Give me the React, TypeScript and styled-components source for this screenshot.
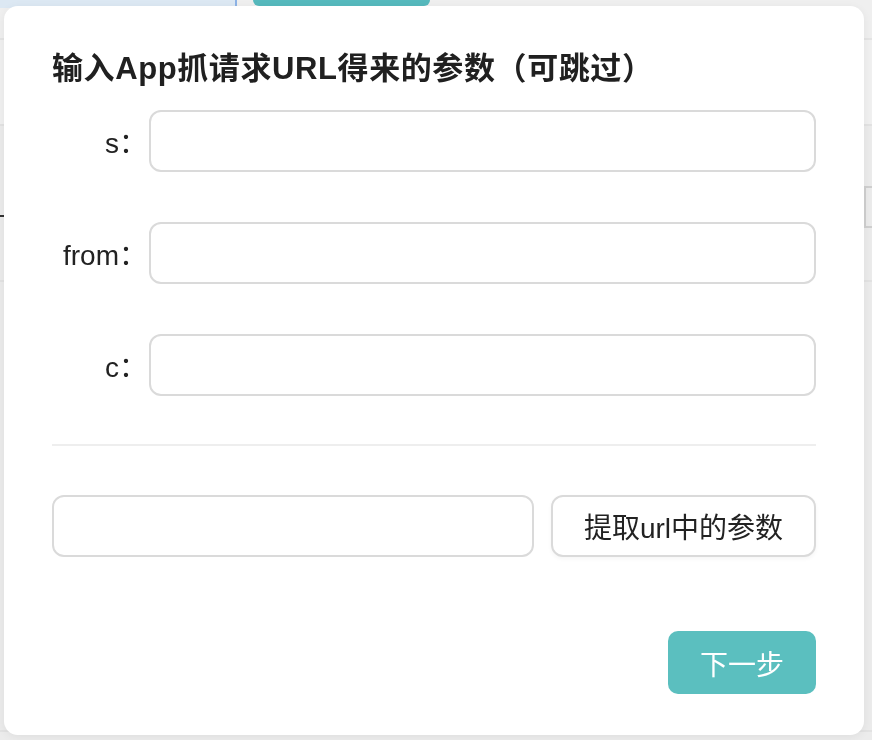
import React from "react";
import styled, { createGlobalStyle } from "styled-components";

const Global = createGlobalStyle`
  html, body { margin: 0; padding: 0; }
  body {
    width: 872px;
    height: 740px;
    overflow: hidden;
    background: #ececec;
    font-family: "Liberation Sans", "Noto Sans CJK SC", sans-serif;
  }
  * { box-sizing: border-box; }
`;

/* ---------- dimmed page behind the dialog ---------- */
const Page = styled.div`
  width: 872px;
  height: 740px;
  display: flex;
  flex-direction: column;
  background: #ececec;
`;

const TopBar = styled.div`
  height: 40px;
  display: flex;
  align-items: flex-start;
  background: #efefef;
  border-bottom: 2px solid #e4e4e4;
`;

const BlueArea = styled.div`
  width: 237px;
  height: 8px;
  background: #dce8f3;
  border-right: 2px solid #8db3e6;
`;

const TealTab = styled.div`
  width: 177px;
  height: 6px;
  margin-left: 16px;
  background: #56b9bd;
  border-radius: 0 0 10px 10px;
`;

const BgRow = styled.div<{ $h: number; $light?: boolean }>`
  height: ${(p) => p.$h}px;
  display: flex;
  align-items: flex-start;
  justify-content: space-between;
  background: ${(p) => (p.$light ? "#f0f0f0" : "#ebebeb")};
  border-bottom: 2px solid #e2e2e2;
`;

const DarkMark = styled.div`
  width: 6px;
  height: 2px;
  margin-top: 89px;
  background: #333;
`;

const BoxEdge = styled.div`
  width: 8px;
  height: 42px;
  margin-top: 60px;
  border: 2px solid #cfcfcf;
  border-right: none;
`;

/* ---------- dialog ---------- */
const Dialog = styled.div`
  position: fixed;
  left: 4px;
  top: 6px;
  width: 860px;
  height: 729px;
  background: #ffffff;
  border-radius: 14px;
  box-shadow: 0 2px 10px rgba(0, 0, 0, 0.06);
  padding: 40px 48px 41px 48px;
  display: flex;
  flex-direction: column;
`;

const Title = styled.h2`
  margin: 0 0 19px 0;
  font-size: 31px;
  letter-spacing: 0.6px;
  line-height: 45px;
  font-weight: 700;
  color: #202020;
  white-space: nowrap;
`;

const FormRow = styled.div`
  display: flex;
  align-items: center;
  margin-bottom: 50px;
  &:last-of-type {
    margin-bottom: 0;
  }
`;

const Label = styled.label`
  width: 97px;
  padding-right: 2px;
  flex: none;
  text-align: right;
  font-size: 28px;
  color: #222;
  white-space: nowrap;
`;

const TextInput = styled.input`
  flex: 1;
  min-width: 0;
  height: 62px;
  border: 2px solid #dadada;
  border-radius: 12px;
  padding: 0 20px;
  font-size: 28px;
  font-family: inherit;
  color: #222;
  background: #fff;
  outline: none;
`;

const Fields = styled.div`
  display: flex;
  flex-direction: column;
`;

const Divider = styled.hr`
  margin: 48px 0 49px 0;
  border: none;
  height: 2px;
  background: #eeeeee;
`;

const ExtractRow = styled.div`
  display: flex;
  gap: 17px;
`;

const SecondaryButton = styled.button`
  width: 265px;
  flex: none;
  height: 62px;
  border: 2px solid #dadada;
  border-radius: 12px;
  background: #fff;
  box-shadow: 0 2px 4px rgba(0, 0, 0, 0.04);
  font-size: 28px;
  font-family: inherit;
  color: #222;
  cursor: pointer;
`;

const Footer = styled.div`
  margin-top: auto;
  display: flex;
  justify-content: flex-end;
`;

const PrimaryButton = styled.button`
  width: 148px;
  height: 63px;
  border: none;
  border-radius: 10px;
  background: #5bbfbf;
  color: #fff;
  font-size: 28px;
  font-family: inherit;
  cursor: pointer;
`;

const fields = [
  { id: "s", label: "s：" },
  { id: "from", label: "from：" },
  { id: "c", label: "c：" },
];

export default function App() {
  return (
    <>
      <Global />
      <Page>
        <TopBar>
          <BlueArea />
          <TealTab />
        </TopBar>
        <BgRow $h={86} $light />
        <BgRow $h={156}>
          <DarkMark />
          <BoxEdge />
        </BgRow>
        <BgRow $h={450} />
      </Page>
      <Dialog>
        <Title>输入App抓请求URL得来的参数（可跳过）</Title>
        <Fields>
          {fields.map((f) => (
            <FormRow key={f.id}>
              <Label htmlFor={f.id}>{f.label}</Label>
              <TextInput id={f.id} />
            </FormRow>
          ))}
        </Fields>
        <Divider />
        <ExtractRow>
          <TextInput />
          <SecondaryButton>提取url中的参数</SecondaryButton>
        </ExtractRow>
        <Footer>
          <PrimaryButton>下一步</PrimaryButton>
        </Footer>
      </Dialog>
    </>
  );
}
